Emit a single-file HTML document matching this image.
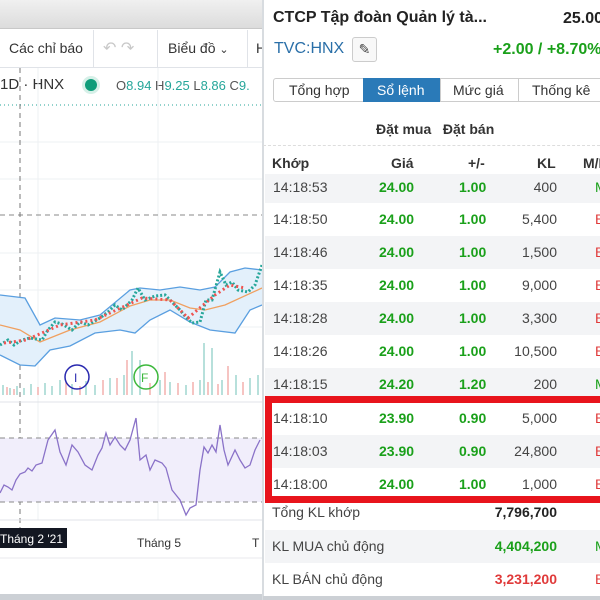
<!DOCTYPE html>
<html><head><meta charset="utf-8"><style>
*{margin:0;padding:0;box-sizing:border-box}
body{width:600px;height:600px;overflow:hidden;background:#fff;font-family:"Liberation Sans",sans-serif;position:relative}
.a{position:absolute;white-space:nowrap}
.g{color:#1aa01a;font-weight:bold}
.r{color:#e03a3a}
.row{position:absolute;left:265px;width:335px;height:33px;font-size:14px;color:#444}
.row span{position:absolute;top:8px}
</style></head><body>
<div class="a" style="left:0;top:0;width:263px;height:29px;background:linear-gradient(#f0f0f0,#dcdcdc);border-bottom:1px solid #c8c8c8"></div>
<div class="a" style="left:0;top:29px;width:263px;height:39px;background:#fff;border-bottom:1px solid #e0e3e8"></div>
<div class="a" style="left:9px;top:40px;font-size:14px;color:#333">Các chỉ báo</div>
<div class="a" style="left:93px;top:30px;width:1px;height:38px;background:#e0e3e8"></div>
<div class="a" style="left:103px;top:38px;font-size:16px;color:#c8c8c8">↶ ↷</div>
<div class="a" style="left:157px;top:30px;width:1px;height:38px;background:#e0e3e8"></div>
<div class="a" style="left:168px;top:40px;font-size:14px;color:#333">Biểu đồ <span style="font-size:11px">⌄</span></div>
<div class="a" style="left:247px;top:30px;width:1px;height:38px;background:#e0e3e8"></div>
<div class="a" style="left:256px;top:40px;font-size:14px;color:#333">H</div>
<div class="a" style="left:0;top:76px;font-size:15px;color:#333">1D · HNX</div>
<div class="a" style="left:85px;top:79px;width:12px;height:12px;border-radius:50%;background:#0f9d7a;box-shadow:0 0 0 3px #d6f0e8"></div>
<div class="a" style="left:116px;top:78px;font-size:13px;color:#555">O<span style="color:#26a69a">8.94</span> H<span style="color:#26a69a">9.25</span> L<span style="color:#26a69a">8.86</span> C<span style="color:#26a69a">9.</span></div>
<svg class="a" style="left:0;top:68px" width="263" height="532" viewBox="0 68 263 532">
<g stroke="#eef0f3" stroke-width="1"><line x1="0" y1="142" x2="263" y2="142"/><line x1="0" y1="179" x2="263" y2="179"/><line x1="0" y1="253" x2="263" y2="253"/><line x1="0" y1="290" x2="263" y2="290"/><line x1="0" y1="327" x2="263" y2="327"/><line x1="38" y1="68" x2="38" y2="520"/><line x1="158" y1="68" x2="158" y2="520"/></g>
<line x1="0" y1="105" x2="263" y2="105" stroke="#26a69a" stroke-dasharray="1 3"/>
<line x1="0" y1="215" x2="263" y2="215" stroke="#888" stroke-dasharray="5 4"/>
<line x1="20" y1="68" x2="20" y2="530" stroke="#777" stroke-dasharray="5 4"/>
<path d="M0,295 25,298 40,325 55,318 80,320 100,315 130,290 140,288 160,290 180,287 200,290 215,287 230,272 245,268 262,270 L262,305 250,310 235,333 210,330 190,322 170,310 150,320 135,333 120,330 95,333 70,346 50,350 35,366 20,365 0,355Z" fill="#e3f0fb"/>
<polyline points="0,295 25,298 40,325 55,318 80,320 100,315 130,290 140,288 160,290 180,287 200,290 215,287 230,272 245,268 262,270" fill="none" stroke="#5a9fe0" stroke-width="1.3"/>
<polyline points="0,355 20,365 35,366 50,350 70,346 95,333 120,330 135,333 150,320 170,310 190,322 210,330 235,333 250,310 262,305" fill="none" stroke="#5a9fe0" stroke-width="1.3"/>
<polyline points="0,325 20,330 40,342 70,330 100,322 130,306 150,300 170,300 190,308 205,310 225,305 262,288" fill="none" stroke="#f0a060" stroke-width="1.3"/>
<polyline points="0,345 8,340 14,345 22,340 30,338 42,340 48,330 55,322 62,324 72,330 80,322 88,325 100,318 108,312 115,305 122,310 132,300 138,288 145,300 155,296 165,295 175,305 180,310 185,316 192,323 200,322 206,300 212,300 220,272 226,285 232,282 238,290 248,292 255,285 262,265" fill="none" stroke="#26a69a" stroke-width="3" stroke-dasharray="2 2"/>
<polyline points="4,343 12,342 26,340 60,325 95,320 142,298 170,300 188,318 215,295 230,285 245,288" fill="none" stroke="#ef5350" stroke-width="3" stroke-dasharray="2 3"/>
<g stroke-width="1.5">
<path d="M3,395V385M10,395V388M17,395V386M24,395V388M31,395V384M45,395V383M52,395V386M60,395V380M72,395V384M86,395V381M95,395V385M110,395V378M124,395V375M132,395V351M140,395V360M160,395V380M170,395V382M186,395V385M200,395V380M204,395V343M212,395V348M222,395V380M236,395V375M250,395V378M258,395V375" stroke="#9fd6cf"/>
<path d="M7,395V387M14,395V389M38,395V387M66,395V382M80,395V386M103,395V380M117,395V378M127,395V360M150,395V383M165,395V372M178,395V383M193,395V382M208,395V382M218,395V384M228,395V366M243,395V382" stroke="#f3b0ae"/>
</g>
<circle cx="77" cy="377" r="12" fill="none" stroke="#2a2ab0" stroke-width="1.5"/>
<text x="74" y="382" font-size="12" fill="#2a2ab0" font-family="Liberation Sans">I</text>
<circle cx="146" cy="377" r="12" fill="none" stroke="#3cb83c" stroke-width="1.5"/>
<text x="141" y="382" font-size="12" fill="#3cb83c" font-family="Liberation Sans">F</text>
<line x1="0" y1="402" x2="263" y2="402" stroke="#e0e3e8"/>
<rect x="0" y="438" width="263" height="64" fill="#f1eefb"/>
<line x1="0" y1="438" x2="263" y2="438" stroke="#888" stroke-dasharray="5 4"/>
<line x1="0" y1="502" x2="263" y2="502" stroke="#888" stroke-dasharray="5 4"/>
<polyline points="0,493 4,485 8,487 12,490 16,480 20,474 25,472 28,468 32,471 36,465 42,463 48,440 55,430 60,452 66,465 72,445 78,452 85,465 92,470 98,455 102,448 106,433 110,445 115,437 120,445 125,450 130,440 136,418 140,460 146,455 150,470 155,460 162,463 166,468 172,490 180,500 186,515 190,508 196,505 200,470 204,447 208,453 212,445 216,452 220,425 224,450 228,465 235,450 240,460 245,468 250,465 255,450 260,440" fill="none" stroke="#8a72c8" stroke-width="1.3"/>
<line x1="0" y1="520" x2="263" y2="520" stroke="#e0e3e8"/>
<rect x="0" y="528" width="67" height="20" fill="#131722"/>
<text x="0" y="543" font-size="12" fill="#fff" font-family="Liberation Sans">Tháng 2 '21</text>
<text x="137" y="547" font-size="12" fill="#333" font-family="Liberation Sans">Tháng 5</text>
<text x="252" y="547" font-size="12" fill="#333" font-family="Liberation Sans">T</text>
<line x1="0" y1="558" x2="263" y2="558" stroke="#e8eaee"/>
<rect x="0" y="594" width="263" height="6" fill="#ccd0d5"/>
</svg>
<div class="a" style="left:262px;top:0;width:338px;height:600px;background:#fff;border-left:2px solid #d8dce0"></div>
<div class="a" style="left:273px;top:9px;font-size:16px;font-weight:bold;color:#222">CTCP Tập đoàn Quản lý tà...</div>
<div class="a" style="left:563px;top:10px;font-size:16px;font-weight:bold;color:#222">25.00</div>
<div class="a" style="left:274px;top:40px;font-size:16px;color:#2a6fa8">TVC:HNX</div>
<div class="a" style="left:352px;top:37px;width:25px;height:25px;border:1px solid #ccc;border-radius:3px;background:#f8f8f8;font-size:14px;text-align:center;line-height:23px;color:#444">✎</div>
<div class="a" style="left:493px;top:41px;font-size:16px" ><span class="g">+2.00 / +8.70%</span></div>
<div class="a" style="left:273px;top:78px;width:340px;height:24px;border:1px solid #ccc;border-radius:3px;font-size:14px;color:#333">
<span class="a" style="left:15px;top:3px">Tổng hợp</span>
<span class="a" style="left:89px;top:-1px;width:77px;height:24px;background:#2a7ab8;color:#fff;padding:4px 0 0 14px">Sổ lệnh</span>
<span class="a" style="left:166px;top:-1px;width:1px;height:24px;background:#ccc"></span>
<span class="a" style="left:179px;top:3px">Mức giá</span>
<span class="a" style="left:244px;top:-1px;width:1px;height:24px;background:#ccc"></span>
<span class="a" style="left:258px;top:3px">Thống kê</span>
</div>
<div class="a" style="left:376px;top:121px;font-size:14px;font-weight:bold;color:#333">Đặt mua&nbsp;&nbsp;&nbsp;Đặt bán</div>
<div class="a" style="left:263px;top:145px;width:337px;border-top:1px dashed #ddd"></div>
<div class="row" style="top:147px;font-weight:bold;color:#333;height:26px"><span style="left:7px">Khớp</span><span style="left:126px">Giá</span><span style="left:203px">+/-</span><span style="left:272px">KL</span><span style="left:318px">M/B</span></div>
<div class="row" style="top:174px;background:#f3f4f6;height:29px"><span style="left:8px;top:5px">14:18:53</span><span class="g" style="left:114px;top:5px">24.00</span><span class="g" style="left:194px;top:5px">1.00</span><span style="right:43px;top:5px">400</span><span class="g" style="left:330px;top:5px;font-weight:normal">M</span></div>
<div class="row" style="top:203px"><span style="left:8px">14:18:50</span><span class="g" style="left:114px">24.00</span><span class="g" style="left:194px">1.00</span><span style="right:43px">5,400</span><span class="r" style="left:330px">B</span></div>
<div class="row" style="top:236px;background:#f3f4f6"><span style="left:8px">14:18:46</span><span class="g" style="left:114px">24.00</span><span class="g" style="left:194px">1.00</span><span style="right:43px">1,500</span><span class="r" style="left:330px">B</span></div>
<div class="row" style="top:269px"><span style="left:8px">14:18:35</span><span class="g" style="left:114px">24.00</span><span class="g" style="left:194px">1.00</span><span style="right:43px">9,000</span><span class="r" style="left:330px">B</span></div>
<div class="row" style="top:302px;background:#f3f4f6"><span style="left:8px">14:18:28</span><span class="g" style="left:114px">24.00</span><span class="g" style="left:194px">1.00</span><span style="right:43px">3,300</span><span class="r" style="left:330px">B</span></div>
<div class="row" style="top:335px"><span style="left:8px">14:18:26</span><span class="g" style="left:114px">24.00</span><span class="g" style="left:194px">1.00</span><span style="right:43px">10,500</span><span class="r" style="left:330px">B</span></div>
<div class="row" style="top:368px;background:#f3f4f6"><span style="left:8px">14:18:15</span><span class="g" style="left:114px">24.20</span><span class="g" style="left:194px">1.20</span><span style="right:43px">200</span><span class="g" style="left:330px;font-weight:normal">M</span></div>
<div class="row" style="top:402px"><span style="left:8px">14:18:10</span><span class="g" style="left:114px">23.90</span><span class="g" style="left:194px">0.90</span><span style="right:43px">5,000</span><span class="r" style="left:330px">B</span></div>
<div class="row" style="top:435px;background:#f3f4f6"><span style="left:8px">14:18:03</span><span class="g" style="left:114px">23.90</span><span class="g" style="left:194px">0.90</span><span style="right:43px">24,800</span><span class="r" style="left:330px">B</span></div>
<div class="row" style="top:468px;border-bottom:2px solid #bbb"><span style="left:8px">14:18:00</span><span class="g" style="left:114px">24.00</span><span class="g" style="left:194px">1.00</span><span style="right:43px">1,000</span><span class="r" style="left:330px">B</span></div>
<div class="row" style="top:497px"><span style="left:7px;top:7px">Tổng KL khớp</span><span style="right:43px;top:7px;font-weight:bold;color:#222">7,796,700</span></div>
<div class="row" style="top:530px;background:#f3f4f6"><span style="left:7px">KL MUA chủ động</span><span class="g" style="right:43px">4,404,200</span><span class="g" style="left:330px;font-weight:normal">M</span></div>
<div class="row" style="top:563px"><span style="left:7px">KL BÁN chủ động</span><span class="r" style="right:43px;font-weight:bold">3,231,200</span><span class="r" style="left:330px">B</span></div>
<div class="a" style="left:263px;top:596px;width:337px;height:4px;background:#ccd0d5"></div>
<div class="a" style="left:265px;top:396px;width:345px;height:107px;border:7px solid #e8141c"></div>
</body></html>
